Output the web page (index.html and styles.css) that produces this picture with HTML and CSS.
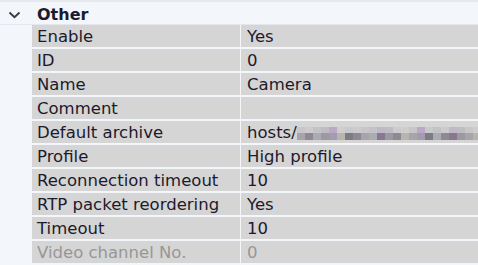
FILE: index.html
```html
<!DOCTYPE html>
<html lang="en">
<head>
  <meta charset="UTF-8">
  <title>Properties</title>
  <link rel="stylesheet" href="styles.css">
</head>
<body>
  <div id="grid">
    <div class="cat">
      <span class="chev">
        <svg width="13" height="8" viewBox="0 0 13 8"><path d="M1.5 1.5 L6.5 6.2 L11.5 1.5" fill="none" stroke="#3a3a44" stroke-width="1.9"/></svg>
      </span>
      <span class="cat-name">Other</span>
    </div>
    <div class="rows">
      <div class="row"><div class="k">Enable</div><div class="v">Yes</div></div>
      <div class="row"><div class="k">ID</div><div class="v">0</div></div>
      <div class="row"><div class="k">Name</div><div class="v">Camera</div></div>
      <div class="row"><div class="k">Comment</div><div class="v"></div></div>
      <div class="row"><div class="k">Default archive</div><div class="v">hosts/<span class="blur"><i class="b1"></i><i class="b2"></i><i class="b3"></i><i class="b4"></i><i class="b5"></i><i class="b6"></i><i class="b7"></i><i class="b2"></i><i class="b1"></i><i class="b3"></i><i class="b8"></i><i class="b4"></i><i class="b2"></i><i class="b6"></i><i class="b1"></i><i class="b5"></i><i class="b7"></i><i class="b3"></i><i class="b2"></i><i class="b8"></i><i class="b4"></i><i class="b1"></i><i class="b6"></i><i class="b3"></i></span></div></div>
      <div class="row"><div class="k">Profile</div><div class="v">High profile</div></div>
      <div class="row"><div class="k">Reconnection timeout</div><div class="v">10</div></div>
      <div class="row"><div class="k">RTP packet reordering</div><div class="v">Yes</div></div>
      <div class="row"><div class="k">Timeout</div><div class="v">10</div></div>
      <div class="row off"><div class="k">Video channel No.</div><div class="v">0</div></div>
    </div>
  </div>
</body>
</html>
```

FILE: styles.css
```css
body {
  margin: 0;
  background-color: #f3f6fb;
  font-family: "DejaVu Sans", Verdana, sans-serif;
  font-size: 16.5px;
  color: #1c1a2c;
  overflow: hidden;
}

#grid {
  border-top: 2px solid #e6e8ec;
}

.cat {
  height: 23px;
  box-sizing: border-box;
  padding-top: 3px;
  display: flex;
  align-items: center;
  border-bottom: 1px solid #e4e7ec;
}

.chev {
  width: 28px;
  display: flex;
  justify-content: center;
  padding-top: 1px;
}

.cat-name {
  padding-left: 9px;
  font-weight: bold;
  font-size: 16px;
}

.rows {
  margin-left: 32px;
  display: flex;
  flex-direction: column;
  gap: 2px;
}

.row {
  display: grid;
  grid-template-columns: 208px 1fr;
  column-gap: 1px;
  height: 22px;
  overflow: hidden;
  background-color: #f6f6f6;
}

.row .k,
.row .v {
  background-color: #d5d5d5;
  padding-left: 5px;
  line-height: 24px;
  white-space: nowrap;
  overflow: hidden;
}

.row .v {
  padding-left: 6px;
}

.off {
  color: #979797;
}

.blur {
  display: inline-flex;
  vertical-align: top;
  height: 24px;
  align-items: center;
}

.blur i {
  display: inline-block;
  width: 8px;
  height: 13px;
  margin-top: 1px;
}

.b1 { background: linear-gradient(#c9c6ca 45%, #a8a4aa 45%); }
.b2 { background: linear-gradient(#cdcbcd 45%, #8f8a92 45%); }
.b3 { background: linear-gradient(#c4c2c6 45%, #a9acb2 45%); }
.b4 { background: linear-gradient(#bfbcc2 45%, #9c9aa0 45%); }
.b5 { background: linear-gradient(#b9a9c4 45%, #a69ab2 45%); }
.b6 { background: linear-gradient(#d0cdcf 45%, #b8b4ae 45%); }
.b7 { background: linear-gradient(#c8c9cc 45%, #7e7b82 45%); }
.b8 { background: linear-gradient(#bfb8c6 45%, #8a7892 45%); }
```
